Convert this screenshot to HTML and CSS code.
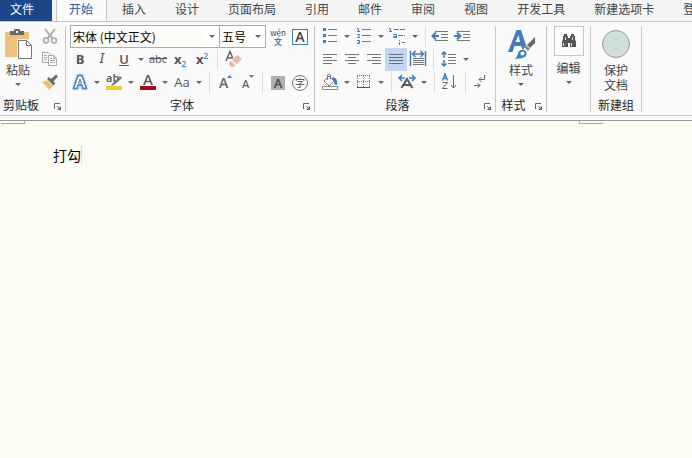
FILE: index.html
```html
<!DOCTYPE html>
<html lang="zh-CN">
<head>
	<meta charset="utf-8">
	<title>打勾</title>
	<link rel="stylesheet" href="styles.css">
</head>
<body>
	<nav class="tabs">
		<button class="tab file">文件</button>
		<button class="tab active">开始</button>
		<button class="tab">插入</button>
		<button class="tab">设计</button>
		<button class="tab">页面布局</button>
		<button class="tab">引用</button>
		<button class="tab">邮件</button>
		<button class="tab">审阅</button>
		<button class="tab">视图</button>
		<button class="tab">开发工具</button>
		<button class="tab">新建选项卡</button>
		<button class="tab">登</button>
	</nav>

	<div class="ribbon">
		<!-- clipboard -->
		<section class="group clipboard">
			<div class="columns">
				<button class="big">
					<svg width="30" height="32" viewBox="0 0 30 32">
						<path d="M2 4h24v25H2z" fill="#ecc27b"/>
						<path d="M7 3h4V2q0-1 1-1h4q1 0 1 1v1h4v4H7z" fill="#686868"/>
						<path d="M13 3h2v2h-2z" fill="#fff"/>
						<path d="M14 11h11l6 6v15H14z" fill="#fafafa"/>
						<path d="M15.500 12.500h8l5 5v13h-13z" fill="#fff" stroke="#777"/>
						<path d="M23.500 12.500v5h5" fill="none" stroke="#777"/>
					</svg>
					<span>粘贴</span>
					<i class="arrow"></i>
				</button>
				<div class="stack">
					<button class="icon" aria-label="剪切">
						<svg width="22" height="22" viewBox="0 0 22 22" fill="none" stroke="#a9a9ad">
							<path d="M6 4l7.500 9.500M16 4l-7.500 9.500" stroke-width="2"/>
							<circle cx="7" cy="15.500" r="2.500" stroke-width="1.500"/><circle cx="15" cy="15.500" r="2.500" stroke-width="1.500"/>
						</svg>
					</button>
					<button class="icon" aria-label="复制">
						<svg width="22" height="22" viewBox="0 0 22 22" fill="#fafafa" stroke="#a9a9ad">
							<path d="M3.500 4.500h6l2 2v8h-8zM5 7.500h3M5 9.500h3M5 11.500h3"/>
							<path d="M9.500 7.500h5l3 3v7h-8zM14.500 7.500v3h3M11 12.500h5M11 14.500h5M11 10.500h2"/>
						</svg>
					</button>
					<button class="icon" aria-label="格式刷">
						<svg width="22" height="22" viewBox="0 0 22 22">
							<path d="M3 11l5-2 6 6-4 4z" fill="#ecc27b"/>
							<path d="M8 8l2-2 2 2 5-4.500 2 2L14.500 10.500l2 2-2 2z" fill="#6c6c6c"/>
						</svg>
					</button>
				</div>
			</div>
			<div class="caption"><span>剪贴板</span>
				<button class="launcher" aria-label="剪贴板选项"><svg width="8" height="8" viewBox="0 0 8 8"><path d="M.5 6V.5H6M3 3l3 3" fill="none" stroke="#666"/><path d="M7 3v4H3z" fill="#666"/></svg></button>
			</div>
		</section>
		<span class="divider"></span>

		<!-- font -->
		<section class="group font">
			<div class="row">
				<label class="combo name"><select aria-label="字体"><option>宋体 (中文正文)</option></select><i class="arrow"></i></label>
				<label class="combo size"><select aria-label="字号"><option>五号</option></select><i class="arrow"></i></label>
				<button class="icon pinyin" aria-label="拼音指南"><span>wén</span><b>文</b></button>
				<button class="icon" aria-label="字符边框"><span class="boxed">A</span></button>
			</div>
			<div class="row">
				<button class="icon text"><b>B</b></button>
				<button class="icon text serif"><i>I</i></button>
				<button class="icon text"><u>U</u></button>
				<button class="drop" aria-label="下划线样式"><i class="arrow"></i></button>
				<button class="icon text small"><s>abc</s></button>
				<button class="icon text"><b>x</b><sub>2</sub></button>
				<button class="icon text"><b>x</b><sup>2</sup></button>
				<span class="sep"></span>
				<button class="icon" aria-label="清除格式">
					<svg width="22" height="22" viewBox="0 0 22 22">
						<path d="M4 13L8 3.500 12 13M5.500 10h5" fill="none" stroke="#666" stroke-width="1.500"/>
						<path d="M7 14l8-8 6 4-9 9z" fill="#fafafa"/>
						<path d="M10 12l5.500-5 4.500 4-5.500 5z" fill="#f0b8a0"/>
						<path d="M9 13l4.500 4-2 2H9.500L7 16.500V15z" fill="#f0b8a0"/>
					</svg>
				</button>
			</div>
			<div class="row">
				<button class="icon" aria-label="文本效果">
					<svg width="22" height="22" viewBox="0 0 22 22" stroke-linejoin="round"><path d="M4.500 17.500L9 4.500h4l4.500 13h-4l-1-3h-3l-1 3z" fill="none" stroke="#cfe2f4" stroke-width="4"/><path d="M4.500 17.500L9 4.500h4l4.500 13h-3.500l-1-3.500H9l-1 3.500z" fill="#fff" stroke="#3f7cb8" stroke-width="1.500"/><path d="M11 8l-1.500 4h3z" fill="#fff" stroke="#3f7cb8"/></svg>
				</button>
				<button class="drop" aria-label="文本效果选项"><i class="arrow"></i></button>
				<button class="icon" aria-label="突出显示">
					<svg width="22" height="22" viewBox="0 0 22 22">
						<text x="3" y="11" class="glyph" font-size="11" fill="#555">ab</text>
						<path d="M9 13l8-8 2 2-8 7-3 1z" fill="#777"/>
						<path d="M3 15h16v4H3z" fill="#f2cb3a"/>
					</svg>
				</button>
				<button class="drop" aria-label="突出显示颜色"><i class="arrow"></i></button>
				<button class="icon" aria-label="字体颜色">
					<svg width="22" height="22" viewBox="0 0 22 22"><text x="6" y="14" class="glyph" font-size="15" fill="#5c5c5c">A</text><path d="M3 15h16v4H3z" fill="#a80a14"/></svg>
				</button>
				<button class="drop" aria-label="选择颜色"><i class="arrow"></i></button>
				<button class="icon text case">Aa</button>
				<button class="drop" aria-label="更改大小写"><i class="arrow"></i></button>
				<span class="sep"></span>
				<button class="icon" aria-label="增大字号">
					<svg width="22" height="22" viewBox="0 0 22 22"><text x="5" y="17" class="glyph" font-size="14" fill="#666">A</text><path d="M13 7l2.500-3L18 7z" fill="#3f7cb8"/></svg>
				</button>
				<button class="icon" aria-label="减小字号">
					<svg width="22" height="22" viewBox="0 0 22 22"><text x="6" y="17" class="glyph" font-size="11" fill="#666">A</text><path d="M13 4h5l-2.500 3z" fill="#3f7cb8"/></svg>
				</button>
				<span class="sep"></span>
				<button class="icon" aria-label="字符底纹"><span class="shaded">A</span></button>
				<button class="icon" aria-label="带圈字符"><span class="circled">字</span></button>
			</div>
			<div class="caption"><span>字体</span>
				<button class="launcher" aria-label="字体选项"><svg width="8" height="8" viewBox="0 0 8 8"><path d="M.5 6V.5H6M3 3l3 3" fill="none" stroke="#666"/><path d="M7 3v4H3z" fill="#666"/></svg></button>
			</div>
		</section>
		<span class="divider"></span>

		<!-- paragraph -->
		<section class="group paragraph">
			<div class="row">
				<button class="icon" aria-label="项目符号">
					<svg width="22" height="22" viewBox="0 0 22 22"><path d="M4 3h3v3H4zM4 9h3v3H4zM4 15h3v3H4z" fill="#3f7cb8"/><path d="M9 4.500h9M9 10.500h9M9 16.500h9" stroke="#777"/></svg>
				</button>
				<button class="drop" aria-label="项目符号库"><i class="arrow"></i></button>
				<button class="icon" aria-label="编号">
					<svg width="22" height="22" viewBox="0 0 22 22" fill="none"><path d="M4 3.500h1.500V7M4 6.500h3M4 9.500h2.500v1L4.500 12.500H7M4 15.500h2.500v3H4M5 17h1.500" stroke="#3f7cb8"/><path d="M9 4.500h9M9 10.500h9M9 16.500h9" stroke="#777"/></svg>
				</button>
				<button class="drop" aria-label="编号库"><i class="arrow"></i></button>
				<button class="icon" aria-label="多级列表">
					<svg width="22" height="22" viewBox="0 0 22 22" fill="none"><path d="M2 3.500h1.500V7M2 6.500h3M6 9.500h3.500V13M9 12.500H6.500v-1H9M12.500 15v1M12.500 17v3" stroke="#3f7cb8"/><path d="M7 4.500h11M11 10.500h7M15 17.500h3" stroke="#777" stroke-dasharray="5 1"/></svg>
				</button>
				<button class="drop" aria-label="列表库"><i class="arrow"></i></button>
				<span class="sep"></span>
				<button class="icon" aria-label="减少缩进量">
					<svg width="22" height="22" viewBox="0 0 22 22" fill="none"><path d="M5 6.500h13M11 9.500h7M11 12.500h7M5 15.500h13" stroke="#777"/><path d="M9 11H3M6 7.500L2.500 11 6 14.500" stroke="#3f7cb8" stroke-width="2"/></svg>
				</button>
				<button class="icon" aria-label="增加缩进量">
					<svg width="22" height="22" viewBox="0 0 22 22" fill="none"><path d="M5 6.500h13M11 9.500h7M11 12.500h7M5 15.500h13" stroke="#777"/><path d="M2 11h6M5 7.500L8.500 11 5 14.500" stroke="#3f7cb8" stroke-width="2"/></svg>
				</button>
			</div>
			<div class="row">
				<button class="icon" aria-label="左对齐"><svg width="22" height="22" viewBox="0 0 22 22"><path d="M4 6.500h14M4 9.500h9M4 12.500h14M4 15.500h9" stroke="#777"/></svg></button>
				<button class="icon" aria-label="居中"><svg width="22" height="22" viewBox="0 0 22 22"><path d="M4 6.500h14M7 9.500h8M4 12.500h14M7 15.500h8" stroke="#777"/></svg></button>
				<button class="icon" aria-label="右对齐"><svg width="22" height="22" viewBox="0 0 22 22"><path d="M4 6.500h14M9 9.500h9M4 12.500h14M9 15.500h9" stroke="#777"/></svg></button>
				<button class="icon pressed" aria-label="两端对齐" aria-pressed="true"><svg width="22" height="22" viewBox="0 0 22 22"><path d="M4 6.500h14M4 9.500h14M4 12.500h14M4 15.500h14" stroke="#68707e"/></svg></button>
				<button class="icon" aria-label="分散对齐">
					<svg width="22" height="22" viewBox="0 0 22 22" fill="none"><path d="M6 10.500h11M6 12.500h11M6 14.500h11M6 16.500h11" stroke="#777"/><path d="M3.500 3v15M18.500 3v15M6 6h10M8.500 3L5.500 6l3 3M13.500 3l3 3-3 3" stroke="#3f7cb8" stroke-width="1.500"/></svg>
				</button>
				<span class="sep"></span>
				<button class="icon" aria-label="行距">
					<svg width="22" height="22" viewBox="0 0 22 22" fill="none"><path d="M10 6.500h8M10 9.500h8M10 12.500h8M10 15.500h8" stroke="#777"/><path d="M6 4v6M6 12v6M3.500 6.500L6 4l2.500 2.500M3.500 15.500L6 18l2.500-2.500" stroke="#3f7cb8" stroke-width="1.500"/></svg>
				</button>
				<button class="drop" aria-label="行距选项"><i class="arrow"></i></button>
			</div>
			<div class="row">
				<button class="icon" aria-label="底纹">
					<svg width="22" height="22" viewBox="0 0 22 22"><path d="M5 10l5-5 5 5-5 5z" fill="#fff" stroke="#777"/><path d="M8.500 9V4q1.500-2 3 0v4" fill="none" stroke="#777"/><path d="M14 6q5 1 4 8l-3-1q1-3-2-5z" fill="#3f7cb8"/><path d="M3.500 15.500h15v3h-15z" fill="#fff" stroke="#888"/></svg>
				</button>
				<button class="drop" aria-label="底纹颜色"><i class="arrow"></i></button>
				<button class="icon" aria-label="边框">
					<svg width="22" height="22" viewBox="0 0 22 22"><path d="M4 4.500h13M4 10.500h13M4.500 5v12M10.500 5v12M16.500 5v12" stroke="#777" stroke-dasharray="1 1"/><path d="M4 16.500h13" stroke="#555"/></svg>
				</button>
				<button class="drop" aria-label="边框样式"><i class="arrow"></i></button>
				<span class="sep"></span>
				<button class="icon" aria-label="中文版式">
					<svg width="22" height="22" viewBox="0 0 22 22" fill="none"><path d="M5.500 17L11 8l5.500 9M7.500 14h7" stroke="#5c5c5c" stroke-width="2"/><path d="M3 7h6M6 4L3 7l3 3M19 7h-6M16 4l3 3-3 3" stroke="#3f7cb8" stroke-width="1.500"/></svg>
				</button>
				<button class="drop" aria-label="中文版式选项"><i class="arrow"></i></button>
				<span class="sep"></span>
				<button class="icon" aria-label="排序">
					<svg width="22" height="22" viewBox="0 0 22 22" fill="none"><path d="M3.500 9.500L6 3l2.500 6.500M4.500 7.500h3" stroke="#3f7cb8" stroke-width="1.500"/><path d="M3.500 11.500h5l-5 6h5M14.500 4v13M12 14l2.500 3 2.500-3" stroke="#666"/></svg>
				</button>
				<span class="sep"></span>
				<button class="icon" aria-label="显示编辑标记">
					<svg width="22" height="22" viewBox="0 0 22 22" fill="none" stroke="#666"><path d="M14.500 4v4.500H9M11.500 6L9 8.500l2.500 2.500M4 14.500h6M7.500 12l2.500 2.500L7.500 17"/></svg>
				</button>
			</div>
			<div class="caption"><span>段落</span>
				<button class="launcher" aria-label="段落选项"><svg width="8" height="8" viewBox="0 0 8 8"><path d="M.5 6V.5H6M3 3l3 3" fill="none" stroke="#666"/><path d="M7 3v4H3z" fill="#666"/></svg></button>
			</div>
		</section>
		<span class="divider"></span>

		<section class="group styles">
			<button class="big">
				<svg width="30" height="32" viewBox="0 0 30 32">
					<path d="M2 24L10.500 2h4.500l5 15-3 5-2-4H8.500L6.500 24zM9.500 14h4.500L12.500 7z" fill="#3f7cb8"/>
					<path d="M29 9v6l-5 5-3-3z" fill="#686868"/>
					<path d="M20 17l4 4-2 2-4-4z" fill="#8b8b8b"/>
					<path d="M7 31q4 0 5-6 2-4 6-3 4 2 2 6-3 3-13 3z" fill="#3f7cb8"/>
					<circle cx="16.500" cy="25.500" r="2" fill="#fff"/>
				</svg>
				<span>样式</span>
				<i class="arrow"></i>
			</button>
			<div class="caption"><span>样式</span>
				<button class="launcher" aria-label="样式选项"><svg width="8" height="8" viewBox="0 0 8 8"><path d="M.5 6V.5H6M3 3l3 3" fill="none" stroke="#666"/><path d="M7 3v4H3z" fill="#666"/></svg></button>
			</div>
		</section>
		<span class="divider"></span>

		<section class="group edit">
			<button class="big">
				<span class="frame">
					<svg width="16" height="14" viewBox="0 0 16 14"><path d="M3 0h3v2h1v2h2V2h1V0h3v2h1v3l1 3v5H9V9H7v4H1V8l1-3V2h1z" fill="#555"/><path d="M2.500 9v3M10.500 9v3M4.500 3v3M11.500 3v3" stroke="#ddd"/></svg>
				</span>
				<span>编辑</span>
				<i class="arrow"></i>
			</button>
		</section>
		<span class="divider"></span>

		<section class="group custom">
			<button class="big">
				<svg width="30" height="32" viewBox="0 0 30 32"><circle cx="15" cy="16" r="13.500" fill="#d0dfda" stroke="#999"/></svg>
				<span>保护<br>文档</span>
			</button>
			<div class="caption"><span>新建组</span></div>
		</section>
		<span class="divider"></span>
	</div>

	<main class="page">
		<div class="margins"><span class="corner left"></span><span class="corner right"></span></div>
		<p class="typed">打勾</p>
	</main>
</body>
</html>
```
FILE: styles.css
```css
* { box-sizing: border-box; }
body {
	margin: 0;
	min-height: 100vh;
	display: flex;
	flex-direction: column;
	overflow: hidden;
	background-color: #fafafa;
	color: #444;
	font: 12px/16px "Noto Sans CJK SC", sans-serif;
}
button {
	margin: 0;
	padding: 0;
	border: 0;
	background: none;
	color: inherit;
	font: inherit;
}
svg { display: block; flex: none; }

/* tabs */
.tabs {
	display: flex;
	height: 22px;
	overflow: hidden;
	background-color: #f5f5f5;
	border-bottom: 1px solid #c6c6c6;
}
.tab {
	flex: none;
	padding: 0 14px 4px 15px;
	white-space: nowrap;
}
.tab.file {
	width: 52px;
	margin-right: 4px;
	padding: 0 8px 4px 0;
	background-color: #19478a;
	color: white;
}
.tab.active {
	height: 22px;
	padding: 0 13px 5px 12px;
	border: 1px solid #c6c6c6;
	border-width: 0 1px;
	background-color: #fafafa;
	color: #2b579a;
}

/* ribbon */
.ribbon {
	display: flex;
	height: 94px;
	border-bottom: 1px solid #c6c6c6;
}
.group {
	flex: none;
	display: flex;
	flex-direction: column;
	padding-top: 3px;
}
.divider {
	width: 1px;
	margin: 4px 0 3px;
	background-color: #c8c8c8;
}
.clipboard { width: 65px; }
.font { width: 248px; padding-left: 3px; }
.paragraph { width: 180px; padding-left: 4px; }
.styles { width: 50px; }
.edit { width: 43px; }
.custom { width: 50px; }

.caption {
	display: flex;
	align-items: center;
	margin-top: auto;
	color: #262626;
	line-height: 20px;
}
.caption span {
	flex: 1;
	text-align: center;
}
.clipboard .caption span {
	padding-left: 3px;
	text-align: left;
}
.font .caption span, .paragraph .caption span { padding-right: 8px; }
.styles .caption span { padding-right: 4px; }
.launcher { width: 11px; padding-top: 3px; }

.columns, .row { display: flex; }
.columns .big { width: 39px; padding-right: 3px; }
.row { align-items: center; height: 23px; }
.big {
	display: flex;
	flex-direction: column;
	align-items: center;
	line-height: 15px;
	padding-top: 3px;
}
.big span { margin-top: 2px; }
.big .arrow { margin-top: 6px; }
.big .frame {
	display: grid;
	place-items: center;
	width: 30px;
	height: 30px;
	margin: 0 0 2px;
	border: 1px solid #c6c6c6;
	background-color: #fdfdfd;
}
.edit .big { padding-top: 1px; }

.icon {
	display: flex;
	align-items: center;
	justify-content: center;
	width: 22px;
	height: 23px;
	flex: none;
}
/* even icons sit on the upper pixel of the odd row */
.icon svg { align-self: flex-start; }
.drop {
	display: flex;
	justify-content: center;
	align-items: center;
	width: 12px;
	height: 23px;
}
.arrow {
	border: 3px solid transparent;
	border-top-color: #666;
	border-bottom: 0;
}
.sep {
	width: 1px;
	height: 21px;
	margin: 0 4px;
	background-color: #dedede;
}
.pressed { background-color: #c2d5f2; }

/* lettered buttons */
.text, .glyph, .boxed, .shaded {
	font-family: "Open Sans", sans-serif;
	font-weight: 600;
}
.text {
	padding-bottom: 2px;
	color: #555;
	font-size: 13px;
}
.text b { font-weight: 700; }
.serif { font-family: "DejaVu Serif", serif; font-weight: 400; }
.small { font-size: 11px; font-weight: 400; }
.case { font-weight: 400; }
.text sub, .text sup {
	color: #3f7cb8;
	font-size: 8px;
	line-height: 8px;
}
.text sub { align-self: flex-end; margin-bottom: 1px; }
.text sup { align-self: flex-start; margin-top: 4px; }
.boxed {
	width: 16px;
	height: 16px;
	border: 1px solid #3f7cb8;
	font-size: 14px;
	line-height: 14px;
}
.shaded {
	width: 14px;
	height: 14px;
	background-color: #b0b0b0;
	font-size: 13px;
	line-height: 14px;
}
.circled {
	width: 16px;
	height: 16px;
	border: 1px solid #777;
	border-radius: 50%;
	font-size: 10px;
	line-height: 14px;
}
.pinyin {
	flex-direction: column;
	font-size: 8px;
	line-height: 9px;
}
.pinyin b { color: #3f7cb8; }

.combo {
	display: flex;
	align-items: center;
	height: 23px;
	padding-right: 4px;
	border: 1px solid #ababab;
	background-color: white;
}
.combo select {
	flex: 1;
	min-width: 0;
	height: 17px;
	padding: 0 2px;
	border: 0;
	appearance: none;
	background-color: #fefdf5;
	color: black;
	font: inherit;
}
.combo .arrow { margin-left: 6px; }
.name { width: 150px; margin-left: 1px; }
.size { width: 47px; margin: 0 1px 0 -1px; }

/* document */
.page {
	flex: 1;
	margin-top: 4px;
	border-top: 1px solid #999;
	background-color: #fcfbf4;
}
.margins {
	display: flex;
	justify-content: space-between;
	height: 3px;
	padding: 0 89px 0 1px;
}
.corner {
	width: 24px;
	border-bottom: 1px solid #aaa;
}
.corner.left { border-right: 1px solid #aaa; }
.corner.right { border-left: 1px solid #aaa; }
.typed {
	width: fit-content;
	margin: 22px 0 0 53px;
	border-right: 1px solid #ddd;
	color: black;
	font-size: 14px;
	line-height: 18px;
}
```
